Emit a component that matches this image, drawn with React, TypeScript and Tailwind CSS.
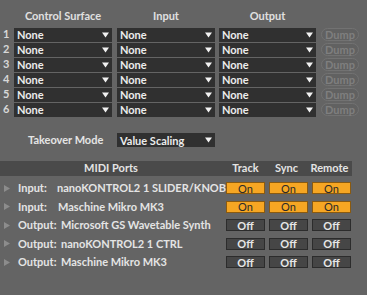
import React from 'react';

const font = { fontFamily: 'Lato, "Liberation Sans", Arial, sans-serif' };

function Arrow() {
  return (
    <svg width="7" height="6" viewBox="0 0 7 6" className="shrink-0">
      <path d="M0 0.5 H7 L3.5 5.5 Z" fill="#f2f2f2" />
    </svg>
  );
}

interface DropdownProps {
  label: string;
  width: string;
}

function Dropdown({ label, width }: DropdownProps) {
  return (
    <div
      className={`${width} h-[14px] bg-[#303030] flex items-center justify-between pl-[3px] pr-[3px] text-[#ececec]`}
    >
      <span className="leading-none">{label}</span>
      <Arrow />
    </div>
  );
}

function SurfaceRow({ n }: { n: number }) {
  return (
    <div className="flex items-center h-[15px]">
      <div className="w-[14px] pl-[3px] text-[#d8d8d8]">{n}</div>
      <Dropdown label="None" width="w-[98px]" />
      <div className="w-[5px]" />
      <Dropdown label="None" width="w-[98px]" />
      <div className="w-[4px]" />
      <Dropdown label="None" width="w-[97px]" />
      <div className="w-[5px]" />
      <div className="w-[38px] h-[13px] rounded-full border border-[#727272] bg-[#616161] text-[#7f7f7f] flex items-center justify-center leading-none">
        Dump
      </div>
    </div>
  );
}

interface PortProps {
  kind: string;
  name: string;
  on: boolean;
}

function Toggle({ on, width }: { on: boolean; width: string }) {
  return (
    <div
      className={`${width} h-[12px] flex items-center justify-center leading-none border ${
        on
          ? 'bg-[#f6a623] border-[#8a5a10] text-[#2a2a2a] font-normal'
          : 'bg-[#464646] border-[#2c2c2c] text-[#e6e6e6]'
      }`}
    >
      {on ? 'On' : 'Off'}
    </div>
  );
}

function PortRow({ kind, name, on }: PortProps) {
  return (
    <div className="flex items-center h-[18.5px]">
      <svg width="6" height="7" viewBox="0 0 6 7" className="ml-[4px] mr-[8px] shrink-0">
        <path d="M0 0 L6 3.5 L0 7 Z" fill="#8c8c8c" />
      </svg>
      <div className={kind === 'Input:' ? 'w-[40px]' : 'w-[43px]'}>{kind}</div>
      <div className="flex-1 whitespace-nowrap">{name}</div>
      <div className="flex items-center gap-[4px] w-[125px] mr-[16px]">
        <Toggle on={on} width="w-[39px]" />
        <Toggle on={on} width="w-[39px]" />
        <Toggle on={on} width="w-[39px]" />
      </div>
    </div>
  );
}

export default function App() {
  const ports: PortProps[] = [
    { kind: 'Input:', name: 'nanoKONTROL2 1 SLIDER/KNOB', on: true },
    { kind: 'Input:', name: 'Maschine Mikro MK3', on: true },
    { kind: 'Output:', name: 'Microsoft GS Wavetable Synth', on: false },
    { kind: 'Output:', name: 'nanoKONTROL2 1 CTRL', on: false },
    { kind: 'Output:', name: 'Maschine Mikro MK3', on: false },
  ];

  return (
    <div
      className="w-[367px] h-[295px] bg-[#646464] text-[#e4e4e4] text-[11px] font-bold overflow-hidden"
      style={font}
    >
      <div className="flex items-center h-[14px] mt-[9px] mb-[4px] text-[#e0e0e0]">
        <div className="w-[112px] pl-[14px] text-center">Control Surface</div>
        <div className="w-[103px] pl-[5px] text-center">Input</div>
        <div className="w-[101px] pl-[4px] text-center">Output</div>
      </div>

      <div className="flex flex-col">
        {[1, 2, 3, 4, 5, 6].map((n) => (
          <SurfaceRow key={n} n={n} />
        ))}
      </div>

      <div className="flex items-center mt-[16px] h-[14px]">
        <div className="w-[117px] pl-[28px]">Takeover Mode</div>
        <Dropdown label="Value Scaling" width="w-[98px]" />
      </div>

      <div className="flex items-center w-[352px] h-[15px] mt-[14px] bg-[#4a4a4a]">
        <div className="w-[222px] text-center">MIDI Ports</div>
        <div className="w-[43px] text-center pl-[4px]">Track</div>
        <div className="w-[43px] text-center">Sync</div>
        <div className="w-[43px] text-center">Remote</div>
      </div>

      <div className="flex flex-col pt-[3px]">
        {ports.map((p, i) => (
          <PortRow key={i} {...p} />
        ))}
      </div>
    </div>
  );
}
